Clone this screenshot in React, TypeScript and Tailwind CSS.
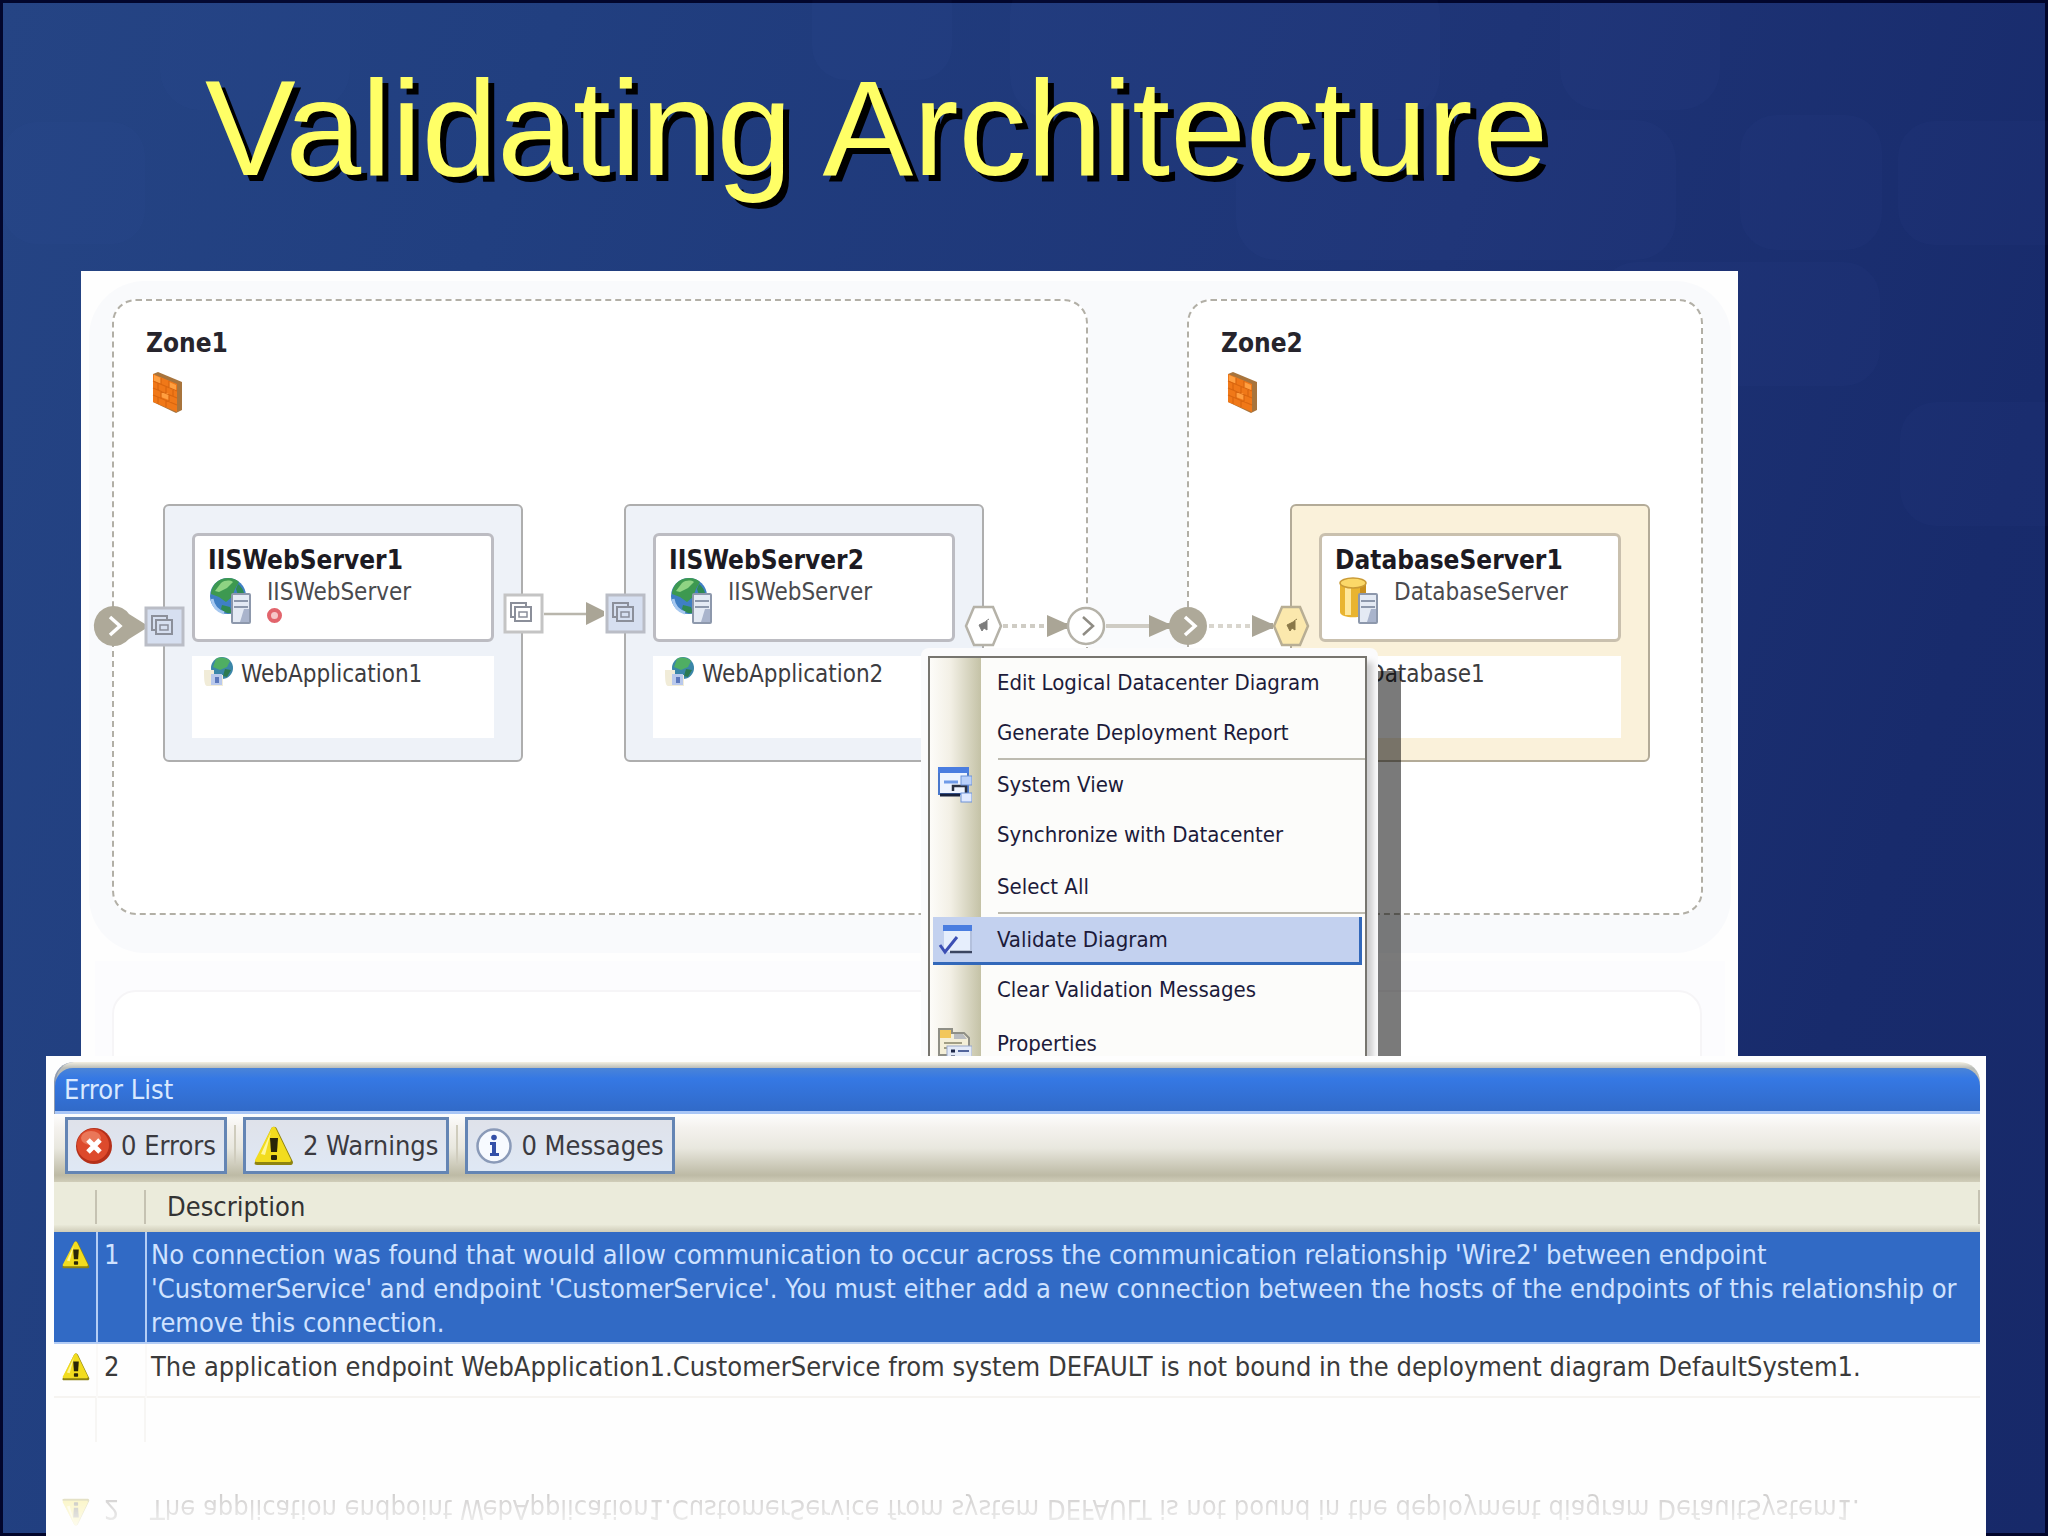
import React from "react";
import clsx from "clsx";

interface ServerNodeProps {
  name: string;
  type: string;
  app: string;
  kind: "web" | "database";
  hasError?: boolean;
  className: string;
}

interface MenuItem {
  label: string;
  icon?: React.ReactNode;
  active?: boolean;
  className?: string;
}

const Backdrop: React.FC = () => (
  <svg className="absolute inset-0 h-full w-full" viewBox="0 0 2048 1536" preserveAspectRatio="none" aria-hidden="true">
    <g fill="#5f8be0" fillOpacity="0.03">
      <rect x="3" y="122" width="142" height="122" rx="34" />
      <rect x="160" y="-40" width="190" height="150" rx="40" />
      <rect x="812" y="-30" width="140" height="110" rx="34" />
      <rect x="1010" y="-30" width="430" height="150" rx="44" />
      <rect x="1236" y="120" width="440" height="140" rx="40" />
      <rect x="1560" y="-50" width="160" height="160" rx="40" />
      <rect x="1740" y="115" width="142" height="135" rx="36" />
      <rect x="1898" y="121" width="190" height="124" rx="36" />
      <rect x="1600" y="262" width="280" height="124" rx="36" />
      <rect x="1900" y="402" width="190" height="124" rx="36" />
    </g>
  </svg>
);

const FirewallIcon: React.FC = () => (
  <svg className="h-[42px] w-[34px]" viewBox="0 0 34 42" aria-hidden="true">
    <path d="M3 3 8 1 32 11v28l-6 3L3 31Z" fill="#a8743c" />
    <path d="M3 3 27 13v28L3 31Z" fill="#f07818" />
    <path d="m4 4 7 3v6l-7-3ZM19 11l7 3v6l-7-3ZM11 20l8 3v6l-8-3Z" fill="#ff9f40" />
    <path d="M3 10l24 10M3 17l24 10M3 24l24 10M11 7v6M19 10v7M8 12v7M16 16v7M11 20v8M19 24v7M8 26v7M16 29v7M23 19v7" stroke="#d9660f" strokeWidth="1.2" fill="none" />
  </svg>
);

const TowerShape: React.FC = () => (
  <>
    <rect x="24" y="18" width="18" height="29" rx="1" fill="#e4eaf4" stroke="#8d98ac" strokeWidth="2" />
    <path d="M26 25h14M26 31h14" stroke="#8d98ac" strokeWidth="2" />
    <path d="M36 33h5v13h-9Z" fill="#a9b4cc" />
  </>
);

const WebServerIcon: React.FC = () => (
  <svg className="h-12 w-11" viewBox="0 0 44 48" aria-hidden="true">
    <circle cx="20" cy="20" r="18" fill="#3f7fc4" />
    <path d="M10 5c6-4 16-4 21 1l-4 7-3 8-6 5-7-5-8-3c0-5 3-10 7-13Z" fill="#3d9950" />
    <path d="M13 7c4-3 9-3 12-1l-6 6-8 4-4-1Z" fill="#8fd383" />
    <path d="M30 8c5 4 7 9 6 14l-6-3-2-6ZM14 29l8 2 2 6c-5 1-8-1-11-4Z" fill="#2f8a52" />
    <path d="M4 23c1 7 6 12 12 14" stroke="#a6c8f0" strokeWidth="3" fill="none" />
    <TowerShape />
  </svg>
);

const DatabaseServerIcon: React.FC = () => (
  <svg className="h-12 w-11" viewBox="0 0 44 48" aria-hidden="true">
    <path d="M5 7v29c0 7 26 7 26 0V7Z" fill="#e9b430" />
    <path d="M10 9v30h6V9Z" fill="#ffe79a" />
    <path d="M25 9v30l6-3V7Z" fill="#c98f1c" />
    <ellipse cx="18" cy="7" rx="13" ry="5" fill="#fbd868" stroke="#c99a36" strokeWidth="1.5" />
    <TowerShape />
  </svg>
);

const WebAppIcon: React.FC = () => (
  <svg className="h-8 w-8" viewBox="0 0 32 32" aria-hidden="true">
    <circle cx="19" cy="12" r="11" fill="#3a86a8" />
    <path d="M13 3c5-3 11-1 14 2l-3 6-7 3-7-3Z" fill="#4fae63" />
    <path d="M22 13l6 1-4 7-4-1Z" fill="#2c7a50" />
    <path d="M1 14h10v5h9v11H4c-3 0-3-9-3-16Z" fill="#f1ecd8" />
    <rect x="8" y="18" width="11" height="11" fill="#b9c9ec" />
    <rect x="12" y="21" width="4" height="6" fill="#5b78bd" />
  </svg>
);

const WarningIcon: React.FC<{ className: string }> = ({ className }) => (
  <svg className={className} viewBox="0 0 40 40" aria-hidden="true">
    <path d="M17 3c1-3 5-3 6 0l16 33c0 2-1 3-2 3H3c-2 0-3-1-2-3Z" fill="#8f8410" />
    <path d="M17 3c1-3 4-3 5 0l15 31c0 2-1 2-2 2H3c-2 0-2-1-2-2Z" fill="#f2dc1e" />
    <path d="M17 6 7 28l4 1Z" fill="#fff79a" />
    <path d="M16 12h8l-1 14h-6Z" fill="#2a2608" />
    <rect x="17" y="29" width="6" height="5" rx="1" fill="#2a2608" />
  </svg>
);

const ErrorIcon: React.FC = () => (
  <svg className="h-9 w-9" viewBox="0 0 36 36" aria-hidden="true">
    <circle cx="18" cy="18" r="18" fill="#b5301a" />
    <circle cx="17" cy="17" r="16" fill="#dd4a2c" />
    <ellipse cx="15" cy="10" rx="10" ry="7" fill="#ef8a6c" fillOpacity="0.7" />
    <path d="m12 12 12 12M24 12 12 24" stroke="#fff" strokeWidth="5" />
  </svg>
);

const InfoIcon: React.FC = () => (
  <svg className="h-9 w-9" viewBox="0 0 36 36" aria-hidden="true">
    <circle cx="18" cy="18" r="16.5" fill="#f7faff" stroke="#8a9ab8" strokeWidth="2.5" />
    <circle cx="18" cy="9.500" r="2.800" fill="#3450a8" />
    <path d="M14 14h6v11h3v3h-9v-3h2v-8h-2Z" fill="#3450a8" />
  </svg>
);

const SystemViewIcon: React.FC = () => (
  <svg className="h-9 w-[34px]" viewBox="0 0 34 36" aria-hidden="true">
    <rect x="1" y="1" width="29" height="26" fill="#eef4ff" stroke="#4a78cc" strokeWidth="2" />
    <path d="M0 0h31v6H0Z" fill="#4a7de0" />
    <path d="M2 28h20" stroke="#16203c" strokeWidth="3" />
    <path d="M6 15h14" stroke="#6f9be8" strokeWidth="3" />
    <path d="M15 24v-5h13v9" stroke="#2a3142" strokeWidth="2.500" fill="none" />
    <rect x="23" y="9" width="11" height="9" fill="#b9d0fa" stroke="#6f93d8" />
    <rect x="23" y="26" width="11" height="9" fill="#dfe9ff" stroke="#6f93d8" />
  </svg>
);

const ValidateIcon: React.FC = () => (
  <svg className="h-[30px] w-[34px]" viewBox="0 0 34 30" aria-hidden="true">
    <rect x="6" y="1" width="28" height="26" fill="#e6eefc" />
    <path d="M5 0h29v6H5Z" fill="#4a7de0" />
    <path d="M12 27h22" stroke="#3a4560" strokeWidth="2.500" />
    <path d="M33 6v20" stroke="#b3c0dc" strokeWidth="2" />
    <path d="m2 20 5 7 12-15" stroke="#3c4fb4" strokeWidth="3" fill="none" />
  </svg>
);

const PropertiesIcon: React.FC = () => (
  <svg className="h-9 w-[34px]" viewBox="0 0 34 36" aria-hidden="true">
    <path d="M1 3h13v4h12l5 5v17H1Z" fill="#f4efd8" stroke="#8f8f86" strokeWidth="2" />
    <path d="M2 4h11v8H2Z" fill="#f2c75a" />
    <path d="M16 8h9l4 5H16Z" fill="#b9bcc0" />
    <path d="M6 17h18M6 22h12" stroke="#a29f86" strokeWidth="2" />
    <rect x="9" y="20" width="25" height="16" fill="#e3eaf8" stroke="#9aa8c8" />
    <path d="M13 25h4M13 31h4" stroke="#1d2748" strokeWidth="3" />
    <path d="M20 25h11M20 31h11" stroke="#52659c" strokeWidth="2" />
  </svg>
);

const ServerNode: React.FC<ServerNodeProps> = ({ name, type, app, kind, hasError, className }) => {
  const isWeb = kind === "web";
  return (
    <article
      className={clsx(
        "absolute top-[233px] flex h-[258px] w-[360px] flex-col gap-[14px] rounded-md border-2 px-[27px] pt-[27px] pb-[22px]",
        isWeb ? "border-[#aeaeae] bg-[#eef2f8]" : "border-[#b3ab98] bg-[#faf1da]",
        className,
      )}
    >
      <div
        className={clsx(
          "h-[109px] rounded-md border-3 bg-white px-[13px] pt-2",
          isWeb ? "border-[#bcbcc2]" : "border-[#c9c0ae]",
        )}
      >
        <h3 className="text-[26px] leading-8 font-bold text-[#1c1a22]">{name}</h3>
        <div className="flex gap-[15px]">
          {isWeb ? <WebServerIcon /> : <DatabaseServerIcon />}
          <div>
            <p className="text-2xl leading-8 text-[#4a4a4e]">{type}</p>
            {hasError && <span className="block size-[15px] rounded-full border-4 border-[#e2646c] bg-[#f6c6c8]" />}
          </div>
        </div>
      </div>
      <div className="flex flex-1 items-start gap-[6px] bg-white pl-[11px]">
        <WebAppIcon />
        <p className="pt-1 text-2xl leading-7 text-[#3c3c40]">{app}</p>
      </div>
    </article>
  );
};

const Zone: React.FC<{ name: string; className: string }> = ({ name, className }) => (
  <section className={clsx("absolute top-7 h-[616px] rounded-[24px] border-2 border-dashed border-[#b2afa6] bg-white px-8 pt-[26px]", className)}>
    <h2 className="text-[26px] leading-8 font-bold text-[#26242c]">{name}</h2>
    <div className="pt-3 pl-1">
      <FirewallIcon />
    </div>
  </section>
);

const CopyGlyph: React.FC<{ x: number; y: number }> = ({ x, y }) => (
  <g transform={`translate(${x} ${y})`} fill="none" stroke="#8b8f9a" strokeWidth="2">
    <path d="M-6 4h-5v-14H4v4" />
    <path d="M-7-6H9v14H-7Z" />
    <path d="M-3-1h8v5h-8Z" strokeWidth="1.500" />
  </g>
);

const Wires: React.FC = () => (
  <svg className="absolute top-0 left-0 h-[785px] w-[1657px]" viewBox="81 271 1657 785" aria-hidden="true">
    <path d="M113 606a20 20 0 0 1 16 8l16 10v5l-16 10a20 20 0 1 1-16-33Z" fill="#aea999" />
    <path d="m110 617 10 9-10 9" stroke="#fff" strokeWidth="3.500" fill="none" />
    <rect x="146" y="608" width="37" height="37" fill="#d6dff0" stroke="#babdc6" strokeWidth="3" />
    <CopyGlyph x={163} y={626} />
    <rect x="505" y="595" width="37" height="37" fill="#fff" stroke="#c4c4c4" strokeWidth="3" />
    <CopyGlyph x={522} y={613} />
    <path d="M544 614h44" stroke="#b9b6ac" strokeWidth="2.500" />
    <path d="m586 602 18 9v5l-18 9Z" fill="#aaa596" />
    <rect x="607" y="595" width="37" height="37" fill="#d6dff0" stroke="#babdc6" strokeWidth="3" />
    <CopyGlyph x={624} y={613} />

    <path d="m974 607 19 0 8 19-8 19h-19l-8-19Z" fill="#fff" stroke="#b5b2a8" strokeWidth="2.500" />
    <path d="M979 625l8-4v9l-3-2-2 3ZM986 621l3-2" fill="#7d7d7d" stroke="#7d7d7d" />
    <path d="M1003 626h44" stroke="#cfccc4" strokeWidth="4" strokeDasharray="5 4" />
    <path d="m1047 615 18 8h3v6h-3l-18 8Z" fill="#aaa596" />
    <circle cx="1086" cy="626" r="18" fill="#fff" stroke="#b5b2a8" strokeWidth="2.500" />
    <path d="m1083 617 10 9-10 9" stroke="#8f8c84" strokeWidth="2.500" fill="none" />
    <path d="M1106 626h44" stroke="#cfccc4" strokeWidth="4" />
    <path d="m1149 615 18 8h3v6h-3l-18 8Z" fill="#aaa596" />
    <circle cx="1188" cy="626" r="19" fill="#aea999" />
    <path d="m1185 617 10 9-10 9" stroke="#fff" strokeWidth="3.500" fill="none" />
    <path d="M1209 626h42" stroke="#d9d6ce" strokeWidth="4" strokeDasharray="5 4" />
    <path d="m1252 615 18 8h3v6h-3l-18 8Z" fill="#aaa596" />
    <path d="m1282 607 18 0 8 19-8 19h-18l-8-19Z" fill="#fbe8ad" stroke="#b8ae94" strokeWidth="2.500" />
    <path d="M1287 625l8-4v9l-3-2-2 3ZM1294 621l3-2" fill="#8a7848" stroke="#8a7848" />
  </svg>
);

const menuGroups: MenuItem[][] = [
  [{ label: "Edit Logical Datacenter Diagram" }, { label: "Generate Deployment Report" }],
  [
    { label: "System View", icon: <SystemViewIcon /> },
    { label: "Synchronize with Datacenter" },
    { label: "Select All", className: "pt-[2px]" },
  ],
  [
    { label: "Validate Diagram", icon: <ValidateIcon />, active: true, className: "pt-[3px]" },
    { label: "Clear Validation Messages" },
    { label: "Properties", icon: <PropertiesIcon />, className: "pt-1" },
  ],
];

const ContextMenu: React.FC = () => (
  <div className="absolute top-[377px] left-[840px] h-[420px] w-[457px] rounded-t-lg bg-[#fbfbfc] pt-2 pr-[11px] pl-[7px]">
    <div className="absolute top-[23px] left-full h-full w-[23px] bg-black/52" />
    <nav
      aria-label="Diagram menu"
      className="h-full border-2 border-[#77756f] bg-[linear-gradient(to_right,#fdfcf9_0px,#f3f0e6_20px,#c4c2a6_51px,#fcfcfa_51px)] shadow-[6px_6px_6px_rgba(0,0,0,0.18)]"
    >
      {menuGroups.map((group, i) => (
        <ul key={i} className={clsx(i > 0 && "before:ml-[68px] before:block before:h-[2px] before:bg-[#bdbbb0]")}>
          {group.map((item) => (
            <li key={item.label} className={clsx("px-[3px]", item.className)}>
              <button
                type="button"
                className={clsx(
                  "grid w-full grid-cols-[64px_1fr] items-center text-left text-[22px] leading-7 whitespace-nowrap text-[#1c1b3a]",
                  item.active ? "h-12 border-r-3 border-b-3 border-[#3268ba] bg-[#c3d1ef]" : "h-[50px]",
                )}
              >
                <span className="pl-[5px]">{item.icon}</span>
                {item.label}
              </button>
            </li>
          ))}
        </ul>
      ))}
    </nav>
  </div>
);

const Diagram: React.FC = () => (
  <section aria-label="Deployment diagram" className="relative mr-[310px] ml-[81px] h-[785px] overflow-hidden bg-[#fefefe]">
    <div className="absolute top-[690px] left-[14px] h-[200px] w-[1630px] bg-[#fcfcfe]" />
    <div className="absolute top-[10px] left-[8px] h-[672px] w-[1642px] rounded-[56px] bg-[#f9fafc]" />
    <div className="absolute top-[719px] left-[31px] h-[200px] w-[1590px] rounded-[24px] border-2 border-[#f6f5f7] bg-white" />
    <Zone name="Zone1" className="left-[31px] w-[976px]" />
    <Zone name="Zone2" className="left-[1106px] w-[516px]" />
    <ServerNode name="IISWebServer1" type="IISWebServer" app="WebApplication1" kind="web" hasError className="left-[82px]" />
    <ServerNode name="IISWebServer2" type="IISWebServer" app="WebApplication2" kind="web" className="left-[543px]" />
    <ServerNode name="DatabaseServer1" type="DatabaseServer" app="Database1" kind="database" className="left-[1209px]" />
    <Wires />
    <ContextMenu />
  </section>
);

const filters = [
  { label: "0 Errors", icon: <ErrorIcon /> },
  { label: "2 Warnings", icon: <WarningIcon className="size-10" /> },
  { label: "0 Messages", icon: <InfoIcon /> },
];

const unboundMessage =
  "The application endpoint WebApplication1.CustomerService from system DEFAULT is not bound in the deployment diagram DefaultSystem1.";

const ErrorList: React.FC = () => (
  <section className="relative mr-[62px] ml-[46px] flex-1 bg-[#fefefe] pt-[6px] pr-[6px] pl-[8px] text-[27px] leading-[34px]">
    <div className="rounded-t-[20px] border-l-2 border-[#8f9bb0] bg-[linear-gradient(#f4f0e2,#b9bcb8_6px)] pt-[6px]">
      <h2 className="-ml-px h-[46px] rounded-t-[18px] border-b-3 border-[#a9c6f6] bg-[linear-gradient(#4a84d8,#3578e4_25%,#316ac8)] pt-[5px] pl-[9px] text-[#d9e9ff]">
        Error List
      </h2>
    </div>
    <div className="flex h-[68px] items-start gap-[15px] bg-[linear-gradient(#fdfdfd,#f4f2ee_20%,#e9e8df_50%,#bdbaa5_90%,#d0cdb9)] pt-[3px] pl-[11px]">
      {filters.map((f, i) => (
        <React.Fragment key={f.label}>
          {i > 0 && <span className="-mx-2 mt-2 h-10 w-[2px] bg-[#cfccbd]" />}
          <button
            type="button"
            className="flex h-[57px] items-center gap-[9px] border-3 border-[#6485b4] bg-[linear-gradient(#dfe2ea,#dfe8f5)] px-2 text-[#3b3a40]"
          >
            {f.icon}
            {f.label}
          </button>
        </React.Fragment>
      ))}
    </div>
    <table className="w-full border-collapse text-left">
      <thead>
        <tr className="h-[50px] bg-[linear-gradient(#ebebdb_85%,#cfccb8)]">
          <th aria-label="Kind" className="w-[43px] bg-[linear-gradient(#c5c2b2,#c5c2b2)] bg-[length:2px_34px] bg-[position:right_8px] bg-no-repeat" />
          <th aria-label="Number" className="w-[49px] bg-[linear-gradient(#c5c2b2,#c5c2b2)] bg-[length:2px_34px] bg-[position:right_8px] bg-no-repeat" />
          <th className="bg-[linear-gradient(#c5c2b2,#c5c2b2)] bg-[length:2px_34px] bg-[position:right_8px] bg-no-repeat pl-[21px] font-normal text-[#333]">Description</th>
        </tr>
      </thead>
      <tbody>
        <tr className="h-[111px] border-b-2 border-[#b4cdf5] bg-[#316ac5] align-top text-[#cfe2ff]">
          <td className="border-r-2 border-[#b4cdf5] pt-[9px] pl-2">
            <WarningIcon className="size-7" />
          </td>
          <td className="border-r-2 border-[#b4cdf5] pt-[6px] pl-[6px]">1</td>
          <td className="pt-[6px] pr-4 pl-1">
            No connection was found that would allow communication to occur across the communication relationship 'Wire2' between endpoint
            'CustomerService' and endpoint 'CustomerService'. You must either add a new connection between the hosts of the endpoints of this
            relationship or remove this connection.
          </td>
        </tr>
        <tr className="h-[54px] border-b-2 border-[#f6f4f1] align-top text-[#3a3a3a]">
          <td className="border-r-2 border-[#faf9f8] pt-[9px] pl-2">
            <WarningIcon className="size-7" />
          </td>
          <td className="border-r-2 border-[#faf9f8] pt-[6px] pl-[6px]">2</td>
          <td className="pt-[6px] pl-1 whitespace-nowrap">{unboundMessage}</td>
        </tr>
      </tbody>
    </table>
    <div className="flex h-11">
      <span className="w-[43px] border-r-2 border-[#f7f6f4]" />
      <span className="w-[49px] border-r-2 border-[#f7f6f4]" />
    </div>
    <div aria-hidden="true" className="mt-[50px] flex -scale-y-100 mask-[linear-gradient(to_bottom,rgba(0,0,0,0.08),rgba(0,0,0,0.28))] text-[#56504e]">
      <span className="w-[50px] pl-2">
        <WarningIcon className="size-7" />
      </span>
      <span className="w-[46px]">2</span>
      <span className="whitespace-nowrap">{unboundMessage}</span>
    </div>
  </section>
);

const App: React.FC = () => {
  return (
    <main className="relative flex min-h-screen flex-col overflow-hidden bg-[linear-gradient(108deg,#254484_0%,#213f80_22%,#1e3476_60%,#182b6c_85%,#172969_100%)] font-['DejaVu_Sans_Condensed','DejaVu_Sans',sans-serif] shadow-[inset_0_0_0_3px_#02062c]">
      <Backdrop />
      <h1 className="relative px-[205px] pt-12 pb-[63px] font-['Liberation_Sans',sans-serif] text-[136px] leading-[160px] whitespace-nowrap text-[#ffff66] [text-shadow:6px_6px_0_#000]">
        Validating Architecture
      </h1>
      <Diagram />
      <ErrorList />
    </main>
  );
};

export default App;
